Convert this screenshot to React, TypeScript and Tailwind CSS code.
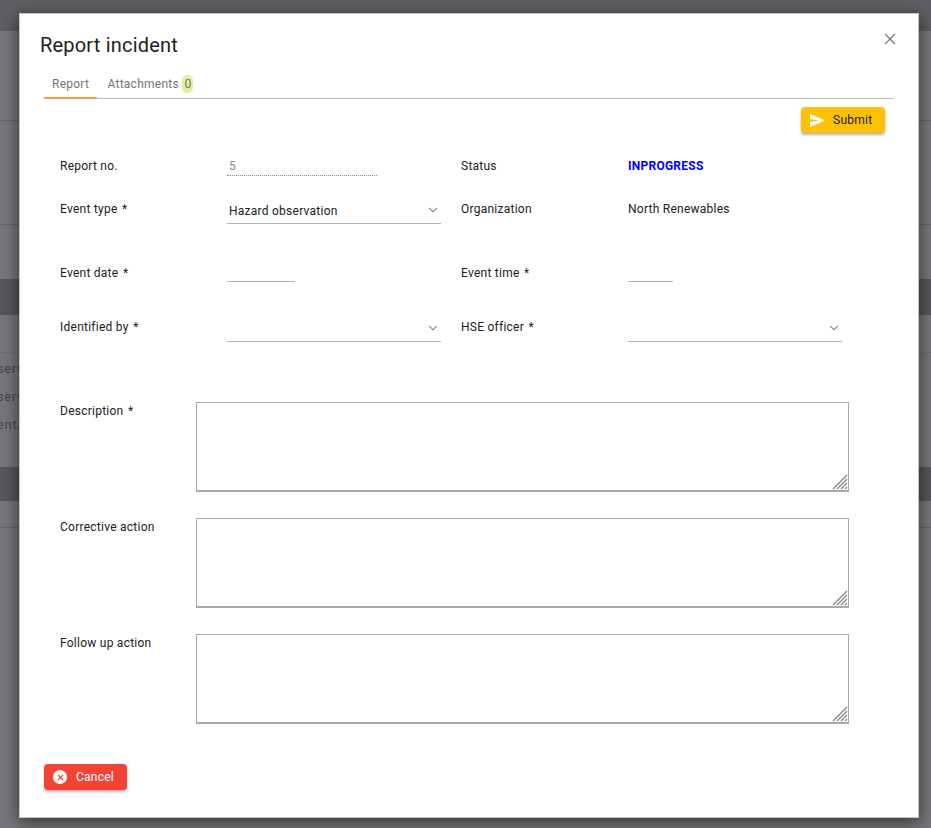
import { ChevronDown, X } from "lucide-react";

function Resizer() {
  return (
    <svg className="absolute right-0 bottom-0" width="16" height="16" viewBox="0 0 16 16" fill="none" stroke="#858585" strokeWidth="1.2">
      <path d="M1 15 L15 1 M5 15 L15 5 M9 15 L15 9 M13 15 L15 13" />
    </svg>
  );
}

function Area({ label, req }: { label: string; req?: boolean }) {
  return (
    <div className="flex items-start">
      <div className="w-[136px] pt-[1px] leading-[16px]">
        {label}
        {req && <span className="ml-[4.5px]">*</span>}
      </div>
      <div className="relative w-[653px] h-[90px] border border-[#a9a9a9] border-b-2">
        <Resizer />
      </div>
    </div>
  );
}

function Select({ value, width = "w-[214px]" }: { value?: string; width?: string }) {
  return (
    <div className={`${width} h-[30px] border-b border-[#b5b5b5] flex items-center justify-between pl-[2px] pr-[1px]`}>
      <span className="mt-[4px] text-[#212121]">{value}</span>
      <ChevronDown size={14} strokeWidth={1.8} className="mt-[2px] text-[#666666]" />
    </div>
  );
}

export default function App() {
  return (
    <div className="relative w-[931px] h-[828px] overflow-hidden bg-[#77777b] text-[12px] tracking-[0.25px] text-[#212121] font-['Roboto',sans-serif]">
      <div className="h-[31px] bg-[#5e5e63]" />
      <div className="h-[90px] border-b border-[#66666a]" />
      <div className="h-[104px] border-b border-[#66666a]" />
      <div className="h-[54px]" />
      <div className="h-[36px] bg-[#57575b]" />
      <div className="h-[38px] border-b border-dotted border-[#69696d]" />
      <div className="h-[28px] pt-[6px] -ml-[3px] text-[13px] tracking-[0.6px] text-[#47474b]">serv</div>
      <div className="h-[28px] pt-[6px] -ml-[3px] text-[13px] tracking-[0.6px] text-[#47474b]">serv</div>
      <div className="h-[28px] pt-[6px] -ml-[3px] text-[13px] tracking-[0.6px] text-[#47474b]">enta</div>
      <div className="h-[30px]" />
      <div className="h-[34px] bg-[#57575b]" />
      <div className="h-[27px] border-b border-[#66666a]" />

      <div className="absolute left-[19px] top-[13px] w-[900px] h-[805px] bg-white shadow-[0_4px_16px_rgba(0,0,0,0.6)] border border-[#c4c4c4]">
        <button className="absolute right-[19px] top-[16px] text-[#757575]"><X size={18} strokeWidth={1.6} /></button>
        <div className="pl-[20px] pt-[18px] text-[20px] leading-[26px] tracking-[0.2px] text-[#212121]">Report incident</div>
        <div className="ml-[24px] mr-[24px] mt-[13px] h-[28px] flex border-b border-[#bdbdbd] text-[#757575]">
          <div className="px-[8px] h-[28px] leading-[27px] border-b-2 border-[#f29c46] w-[53px]">Report</div>
          <div className="ml-[2.5px] px-[8px] h-[27px] leading-[27px] flex">
            Attachments
            <span className="ml-[3.5px] mt-[4px] w-[11px] h-[18px] rounded-full bg-[#e6ee9c] text-center leading-[18px]">0</span>
          </div>
        </div>
        <div className="flex justify-end mr-[33px] mt-[8px]">
          <button className="w-[84px] h-[26px] rounded bg-[#ffc107] flex items-center pl-[9px] shadow-[0_2px_3px_rgba(0,0,0,0.3)]">
            <svg width="15" height="13" viewBox="0 0 15 13" fill="#fff"><path d="M0 0 L15 6.5 L0 13 L0 8 L9 6.5 L0 5 Z" /></svg>
            <span className="ml-[8px]">Submit</span>
          </button>
        </div>

        <div className="ml-[40px] mt-[25px] grid grid-cols-[167px_234px_167px_1fr]">
          <div className="h-[43px] leading-[16px]">Report no.</div>
          <div><div className="w-[150px] h-[18px] border-b border-dotted border-[#888] pl-[2px] leading-[16px] text-[#8a8a8a]">5</div></div>
          <div className="leading-[16px]">Status</div>
          <div className="leading-[16px] font-bold text-[#0000ff]">INPROGRESS</div>

          <div className="h-[64px] leading-[16px]">Event type<span className="ml-[4.5px]">*</span></div>
          <div className="-mt-[7px]"><Select value="Hazard observation" /></div>
          <div className="leading-[16px]">Organization</div>
          <div className="leading-[16px]">North Renewables</div>

          <div className="h-[54px] leading-[16px]">Event date<span className="ml-[4.5px]">*</span></div>
          <div><div className="w-[68px] h-[17px] border-b border-[#b5b5b5]" /></div>
          <div className="leading-[16px]">Event time<span className="ml-[4.5px]">*</span></div>
          <div><div className="w-[45px] h-[17px] border-b border-[#b5b5b5]" /></div>

          <div className="h-[83px] leading-[16px]">Identified by<span className="ml-[4.5px]">*</span></div>
          <div className="-mt-[7px]"><Select /></div>
          <div className="leading-[16px]">HSE officer<span className="ml-[4.5px]">*</span></div>
          <div className="-mt-[7px]"><Select /></div>
        </div>

        <div className="ml-[40px] flex flex-col gap-[26px]">
          <Area label="Description" req />
          <Area label="Corrective action" />
          <Area label="Follow up action" />
        </div>

        <button className="ml-[24px] mt-[40px] w-[83px] h-[26px] rounded bg-[#f44336] text-white flex items-center pl-[9px] shadow-[0_2px_3px_rgba(0,0,0,0.3)]">
          <span className="w-[14px] h-[14px] rounded-full bg-white flex items-center justify-center text-[#f44336]"><X size={9} strokeWidth={3} /></span>
          <span className="ml-[9px]">Cancel</span>
        </button>
      </div>
    </div>
  );
}
